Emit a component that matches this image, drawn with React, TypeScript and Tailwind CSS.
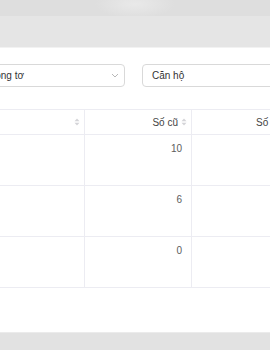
import React from "react";

function SortIcon() {
  return (
    <svg width="6" height="8" viewBox="0 0 6 8" className="shrink-0">
      <path d="M3 0.5 L5.5 3.3 H0.5 Z" fill="#d4d4d8" />
      <path d="M3 7.5 L5.5 4.7 H0.5 Z" fill="#d4d4d8" />
    </svg>
  );
}

export default function App() {
  const rows = [10, 6, 0];
  return (
    <div
      className="w-[270px] h-[350px] overflow-hidden bg-white flex flex-col"
      style={{ fontFamily: '"Liberation Sans", Arial, sans-serif' }}
    >
      <div className="h-[16px] bg-[#dedede] shrink-0 bg-[radial-gradient(ellipse_40px_14px_at_135px_4px,#e9e9e9,#dedede)]" />
      <div className="h-[32px] bg-[#e5e5e5] shrink-0 border-b border-[#f2f2f2]" />
      <div className="h-[16px] shrink-0" />
      <div className="flex gap-[17px] ml-[-24px] shrink-0">
        <div className="w-[149px] h-[23px] border border-[#d9d9d9] rounded-[4px] flex items-center justify-between pl-[11px] pr-[5px] text-[10px] text-[#333] shrink-0">
          <span>Công tơ</span>
          <svg width="8" height="5" viewBox="0 0 8 5">
            <path d="M1 1 L4 4 L7 1" stroke="#b0b0b0" strokeWidth="0.9" fill="none" />
          </svg>
        </div>
        <div className="w-[200px] h-[23px] border border-[#d9d9d9] rounded-[4px] flex items-center pl-[9px] text-[10px] text-[#333] shrink-0">
          Căn hộ
        </div>
      </div>
      <div className="h-[22px] shrink-0" />
      <div className="ml-[-40px] w-[400px] shrink-0">
        <div className="flex h-[26px] border-t border-b border-[#ececf2] text-[10px] text-[#444]">
          <div className="w-[125px] shrink-0 flex items-center justify-end pr-[4px] border-r border-[#ececf2]">
            <SortIcon />
          </div>
          <div className="w-[107px] shrink-0 flex items-center justify-end gap-[3px] pr-[4px] border-r border-[#ececf2]">
            <span>Số cũ</span>
            <SortIcon />
          </div>
          <div className="w-[168px] shrink-0 flex items-center pl-[64px]">
            <span>Số mới</span>
          </div>
        </div>
        {rows.map((v, i) => (
          <div key={i} className="flex h-[51px] border-b border-[#ececf2] text-[10px] text-[#5c5c5c]">
            <div className="w-[125px] shrink-0 border-r border-[#ececf2]" />
            <div className="w-[107px] shrink-0 border-r border-[#ececf2] flex justify-end pr-[9px] pt-[6px]">
              {v}
            </div>
            <div className="w-[168px] shrink-0" />
          </div>
        ))}
      </div>
      <div className="flex-1" />
      <div className="h-[18px] shrink-0 bg-[#e2e2e2] border-t border-[#ebebeb]" />
    </div>
  );
}
